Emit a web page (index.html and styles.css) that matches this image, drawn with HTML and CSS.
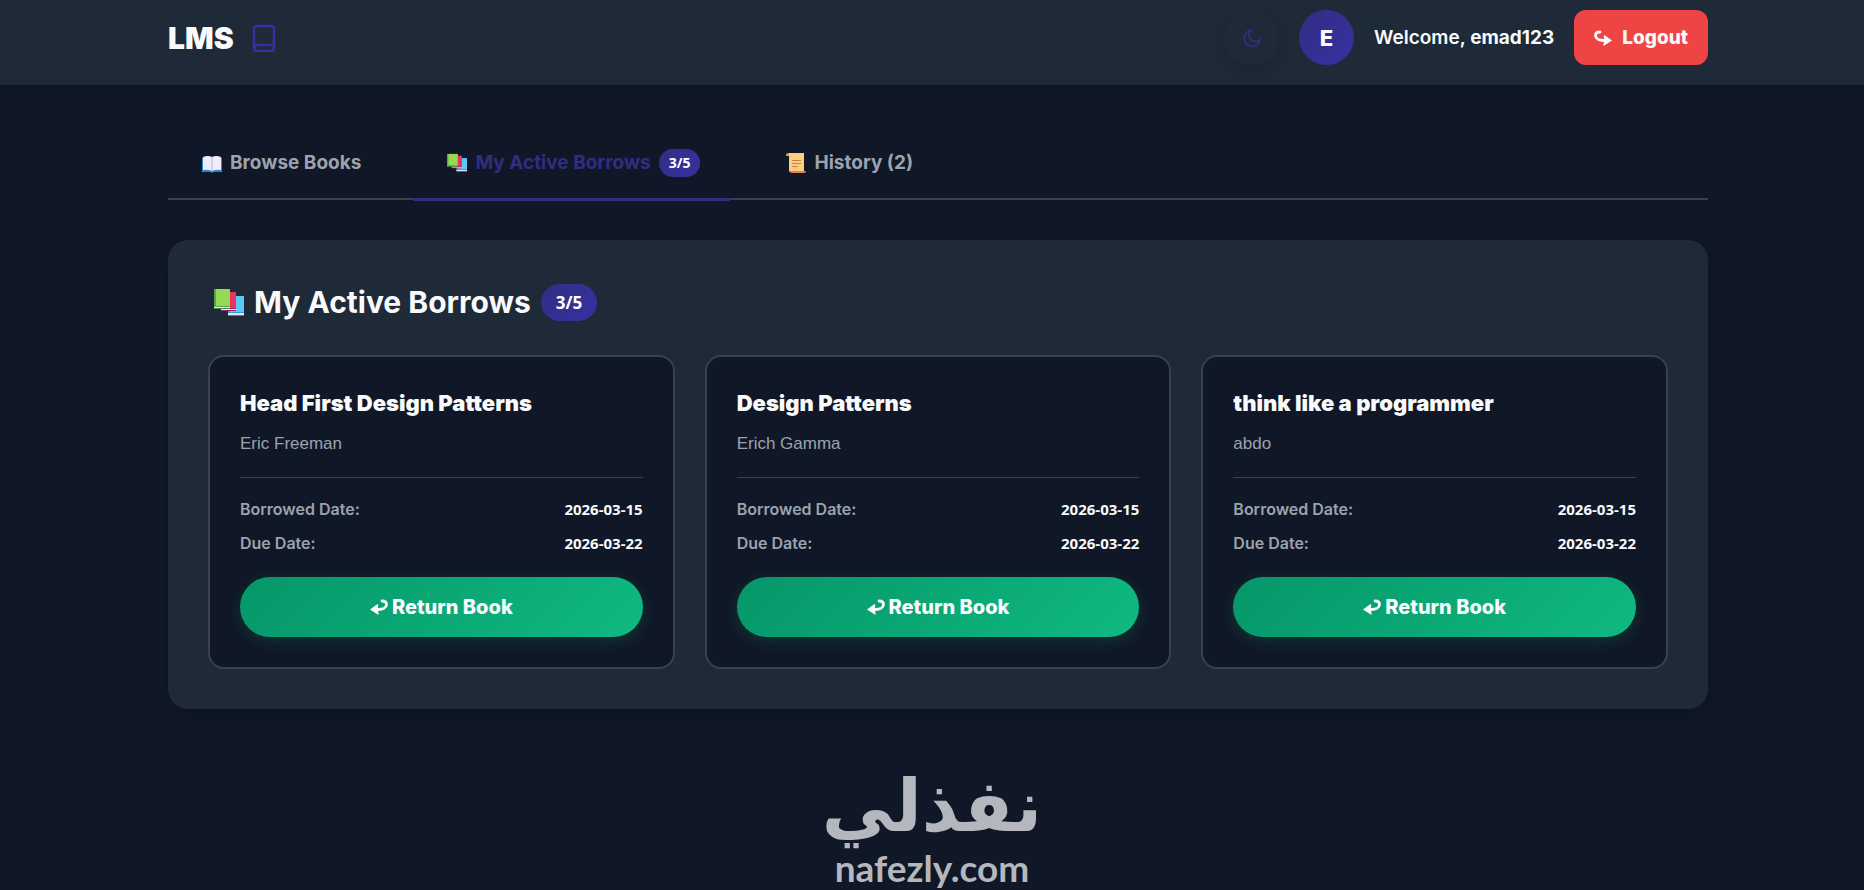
FILE: index.html
```
<!DOCTYPE html>
<html lang="en">
<head>
    <meta charset="UTF-8">
    <meta name="viewport" content="width=device-width, initial-scale=1.0">
    <title>LMS - My Active Borrows</title>
    <link rel="stylesheet" href="styles.css">
</head>
<body>
    <!-- Shared icons -->
    <svg class="icon-defs" aria-hidden="true">
        <symbol id="icon-books" viewBox="0 0 30 28">
            <path fill="#2f9be6" d="M14 7h16v17H14z"/>
            <path fill="#5cc8f5" d="M16 7h14v16H16z"/>
            <path fill="#e8e4f8" d="M14 24h16v2H14z"/>
            <path fill="#5b6fd8" d="M14 26h16v1H14z"/>
            <path fill="#b81f52" d="M7 3h15v17H7z"/>
            <path fill="#e8345f" d="M9 3h13v16H9z"/>
            <path fill="#f3e8f5" d="M7 20h15v1H7z"/>
            <path fill="#a91d5a" d="M7 21h15v1H7z"/>
            <path fill="#5aa544" d="M0 0h16v18H0z"/>
            <path fill="#96d955" d="M2 0h14v17H2z"/>
            <path fill="#e6eef0" d="M0 18h16v1H0z"/>
            <path fill="#3c8a5b" d="M0 19h16v1H0z"/>
        </symbol>
        <symbol id="icon-return" viewBox="0 0 18 16">
            <path fill="none" stroke="currentColor" stroke-width="2.800" stroke-linecap="round" d="M12 2c3 0 4.500 1.500 4.500 3.500 0 3-3.500 5-8 5H5"/>
            <path fill="currentColor" d="M0 10.500l7.500-5.500q1.500.5 0 5.500 1.500 4.500 1 5.500z"/>
        </symbol>
    </svg>

    <header class="header">
        <a href="#" class="brand">
            <span>LMS</span>
            <svg class="brand-icon" viewBox="0 0 24 28" fill="none" stroke="currentColor" stroke-width="2.500">
                <rect x="2" y="2" width="20" height="25" rx="3"/>
                <path d="M2 24a3 3 0 0 1 3-3h17"/>
            </svg>
        </a>
        <div class="user-menu">
            <button class="theme-button" aria-label="Toggle theme">
                <svg class="theme-icon" viewBox="0 0 18 18" fill="none" stroke="currentColor" stroke-width="1.800" stroke-linejoin="round">
                    <path d="M8 1.200A8 8 0 1 0 17 10.500 6 6 0 0 1 8 1.200z"/>
                </svg>
            </button>
            <div class="avatar">E</div>
            <span class="welcome">Welcome, <strong>emad123</strong></span>
            <button class="logout-button">
                <svg class="logout-icon" viewBox="0 0 18 16"><use href="#icon-return"/></svg>
                <span>Logout</span>
            </button>
        </div>
    </header>

    <main class="container">
        <nav class="tabs">
            <button class="tab">
                <svg class="tab-icon" viewBox="0 0 20 20">
                    <path fill="#2f86d8" d="M0 5h20v14h-8l-2 1-2-1H0z"/>
                    <path fill="#f1edfb" d="M1 4q5-2 9 0 4-2 9 0v13q-5-1-9 1-4-2-9-1z"/>
                    <path stroke="#b9b0d6" d="M10 4v14"/>
                </svg>
                <span>Browse Books</span>
            </button>
            <button class="tab active">
                <svg class="tab-icon" viewBox="0 0 30 28"><use href="#icon-books"/></svg>
                <span>My Active Borrows</span>
                <span class="badge">3/5</span>
            </button>
            <button class="tab">
                <svg class="tab-icon" viewBox="0 0 20 20">
                    <path fill="#e8935a" d="M0 2q0-2 3-2h13v3H0z"/>
                    <path fill="#fbcf7c" d="M3 0h15v18H3z"/>
                    <path fill="#e8805a" d="M8 18h12q0 2-2 2H6q-2 0-3-2z"/>
                    <path stroke="#c98052" d="M6 7.500h9M6 10.500h9M6 13.500h6"/>
                </svg>
                <span>History (2)</span>
            </button>
        </nav>

        <section class="panel">
            <h2 class="panel-title">
                <svg class="title-icon" viewBox="0 0 30 28"><use href="#icon-books"/></svg>
                <span>My Active Borrows</span>
                <span class="badge badge-large">3/5</span>
            </h2>

            <div class="books-grid">
                <article class="book-card">
                    <h3 class="book-title">Head First Design Patterns</h3>
                    <p class="book-author">Eric Freeman</p>
                    <dl class="book-dates">
                        <div class="date-row"><dt>Borrowed Date:</dt><dd>2026-03-15</dd></div>
                        <div class="date-row"><dt>Due Date:</dt><dd>2026-03-22</dd></div>
                    </dl>
                    <button class="return-button">
                        <svg class="return-icon" viewBox="0 0 18 16"><use href="#icon-return"/></svg>
                        <span>Return Book</span>
                    </button>
                </article>
                <article class="book-card">
                    <h3 class="book-title">Design Patterns</h3>
                    <p class="book-author">Erich Gamma</p>
                    <dl class="book-dates">
                        <div class="date-row"><dt>Borrowed Date:</dt><dd>2026-03-15</dd></div>
                        <div class="date-row"><dt>Due Date:</dt><dd>2026-03-22</dd></div>
                    </dl>
                    <button class="return-button">
                        <svg class="return-icon" viewBox="0 0 18 16"><use href="#icon-return"/></svg>
                        <span>Return Book</span>
                    </button>
                </article>
                <article class="book-card">
                    <h3 class="book-title">think like a programmer</h3>
                    <p class="book-author">abdo</p>
                    <dl class="book-dates">
                        <div class="date-row"><dt>Borrowed Date:</dt><dd>2026-03-15</dd></div>
                        <div class="date-row"><dt>Due Date:</dt><dd>2026-03-22</dd></div>
                    </dl>
                    <button class="return-button">
                        <svg class="return-icon" viewBox="0 0 18 16"><use href="#icon-return"/></svg>
                        <span>Return Book</span>
                    </button>
                </article>
            </div>
        </section>
    </main>

    <footer class="footer">
        <div class="footer-name" lang="ar" dir="rtl">نفذلي</div>
        <div class="footer-site">nafezly.com</div>
    </footer>
</body>
</html>
```
FILE: styles.css
```
* {
    margin: 0;
    padding: 0;
    box-sizing: border-box;
}

body {
    background-color: #101726;
    color: #f9fafb;
    font-family: Inter, "Liberation Sans", Arial, sans-serif;
    font-size: 16px;
    line-height: 24px;
}

button {
    border: none;
    font: inherit;
    color: inherit;
    cursor: pointer;
}

.icon-defs {
    display: none;
}

.header {
    display: flex;
    align-items: center;
    justify-content: space-between;
    padding: 10px 156px 20px 168px;
    background-color: #1e2a37;
    box-shadow: 0 2px 10px rgba(0, 0, 0, 0.15);
}

.brand {
    display: flex;
    align-items: center;
    gap: 18px;
    color: #f9fafb;
    font-size: 30px;
    font-weight: 900;
    text-decoration: none;
}

.brand-icon {
    width: 24px;
    height: 28px;
    color: #3730a3;
}

.user-menu {
    display: flex;
    align-items: center;
    gap: 20px;
}

.theme-button,
.avatar {
    display: flex;
    align-items: center;
    justify-content: center;
    width: 55px;
    height: 55px;
    border-radius: 50%;
}

.theme-button {
    background-color: #1e2a37;
    color: #312e81;
    box-shadow: 0 6px 15px rgba(0, 0, 0, 0.15);
}

.theme-icon {
    width: 18px;
    height: 18px;
}

.avatar {
    background: linear-gradient(135deg, #312e81, #3730a3);
    font-size: 22px;
    font-weight: 800;
}

.welcome {
    font-size: 19px;
    font-weight: 600;
}

.welcome strong {
    font-weight: 700;
}

.logout-button {
    display: flex;
    align-items: center;
    gap: 10px;
    height: 55px;
    padding: 0 20px;
    border-radius: 12px;
    background-color: #ef4444;
    font-size: 19px;
    font-weight: 800;
}

.logout-icon {
    width: 18px;
    height: 16px;
    transform: scaleX(-1);
}

.container {
    padding: 45px 156px 0 168px;
}

.tabs {
    display: flex;
    gap: 22px;
    margin-bottom: 40px;
    border-bottom: 2px solid #374151;
}

.tab {
    display: flex;
    align-items: center;
    gap: 8px;
    height: 71px;
    margin-bottom: -3px;
    padding: 0 30px 3px 34px;
    border-bottom: 3px solid transparent;
    background: none;
    color: #9ca3af;
    font-size: 19px;
    font-weight: 700;
}

.tab.active {
    border-bottom-color: #312e81;
    color: #312e81;
}

.tab-icon {
    width: 20px;
    height: 20px;
}

.badge {
    padding: 2px 10px;
    border-radius: 20px;
    background: linear-gradient(135deg, #312e81, #3730a3);
    color: #fff;
    font-family: "Open Sans", sans-serif;
    font-size: 14px;
    font-weight: 700;
}

.panel {
    padding: 40px;
    border-radius: 20px;
    background-color: #1e2a37;
    box-shadow: 0 4px 15px rgba(0, 0, 0, 0.2);
}

.panel-title {
    display: flex;
    align-items: center;
    gap: 10px;
    margin-bottom: 30px;
    padding-left: 6px;
    font-size: 30px;
    font-weight: 700;
    line-height: 45px;
}

.title-icon {
    width: 30px;
    height: 28px;
}

.badge-large {
    padding: 6px 15px;
    font-size: 17px;
    line-height: 25px;
}

.books-grid {
    display: grid;
    grid-template-columns: repeat(3, 1fr);
    gap: 30px;
}

.book-card {
    padding: 30px;
    border: 2px solid #374151;
    border-radius: 16px;
    background-color: #101726;
}

.book-title {
    margin-bottom: 12px;
    font-size: 22px;
    font-weight: 900;
    line-height: 32px;
}

.book-author {
    padding-bottom: 20px;
    border-bottom: 1px solid #374151;
    color: #9ca3af;
    font-family: "Liberation Sans", Arial, sans-serif;
    font-size: 17px;
    line-height: 26px;
}

.book-dates {
    padding: 14px 0 17px;
}

.date-row {
    display: flex;
    justify-content: space-between;
    line-height: 34px;
}

.date-row dt {
    color: #9ca3af;
    font-weight: 600;
}

.date-row dd {
    font-family: "Open Sans", sans-serif;
    font-size: 15px;
    font-weight: 700;
}

.return-button {
    display: flex;
    align-items: center;
    justify-content: center;
    gap: 4px;
    width: 100%;
    height: 60px;
    border-radius: 30px;
    background: linear-gradient(135deg, #059669, #10b981);
    box-shadow: 0 4px 15px rgba(16, 185, 129, 0.2);
    font-size: 20px;
    font-weight: 800;
}

.return-icon {
    width: 18px;
    height: 16px;
}

.footer {
    padding-top: 55px;
    color: #b4b7bd;
    text-align: center;
}

.footer-name {
    font-family: "DejaVu Sans", sans-serif;
    font-size: 72px;
    font-weight: 700;
    line-height: 84px;
}

.footer-site {
    font-family: Lato, sans-serif;
    font-size: 37px;
    font-weight: 700;
    line-height: 40px;
}
```
